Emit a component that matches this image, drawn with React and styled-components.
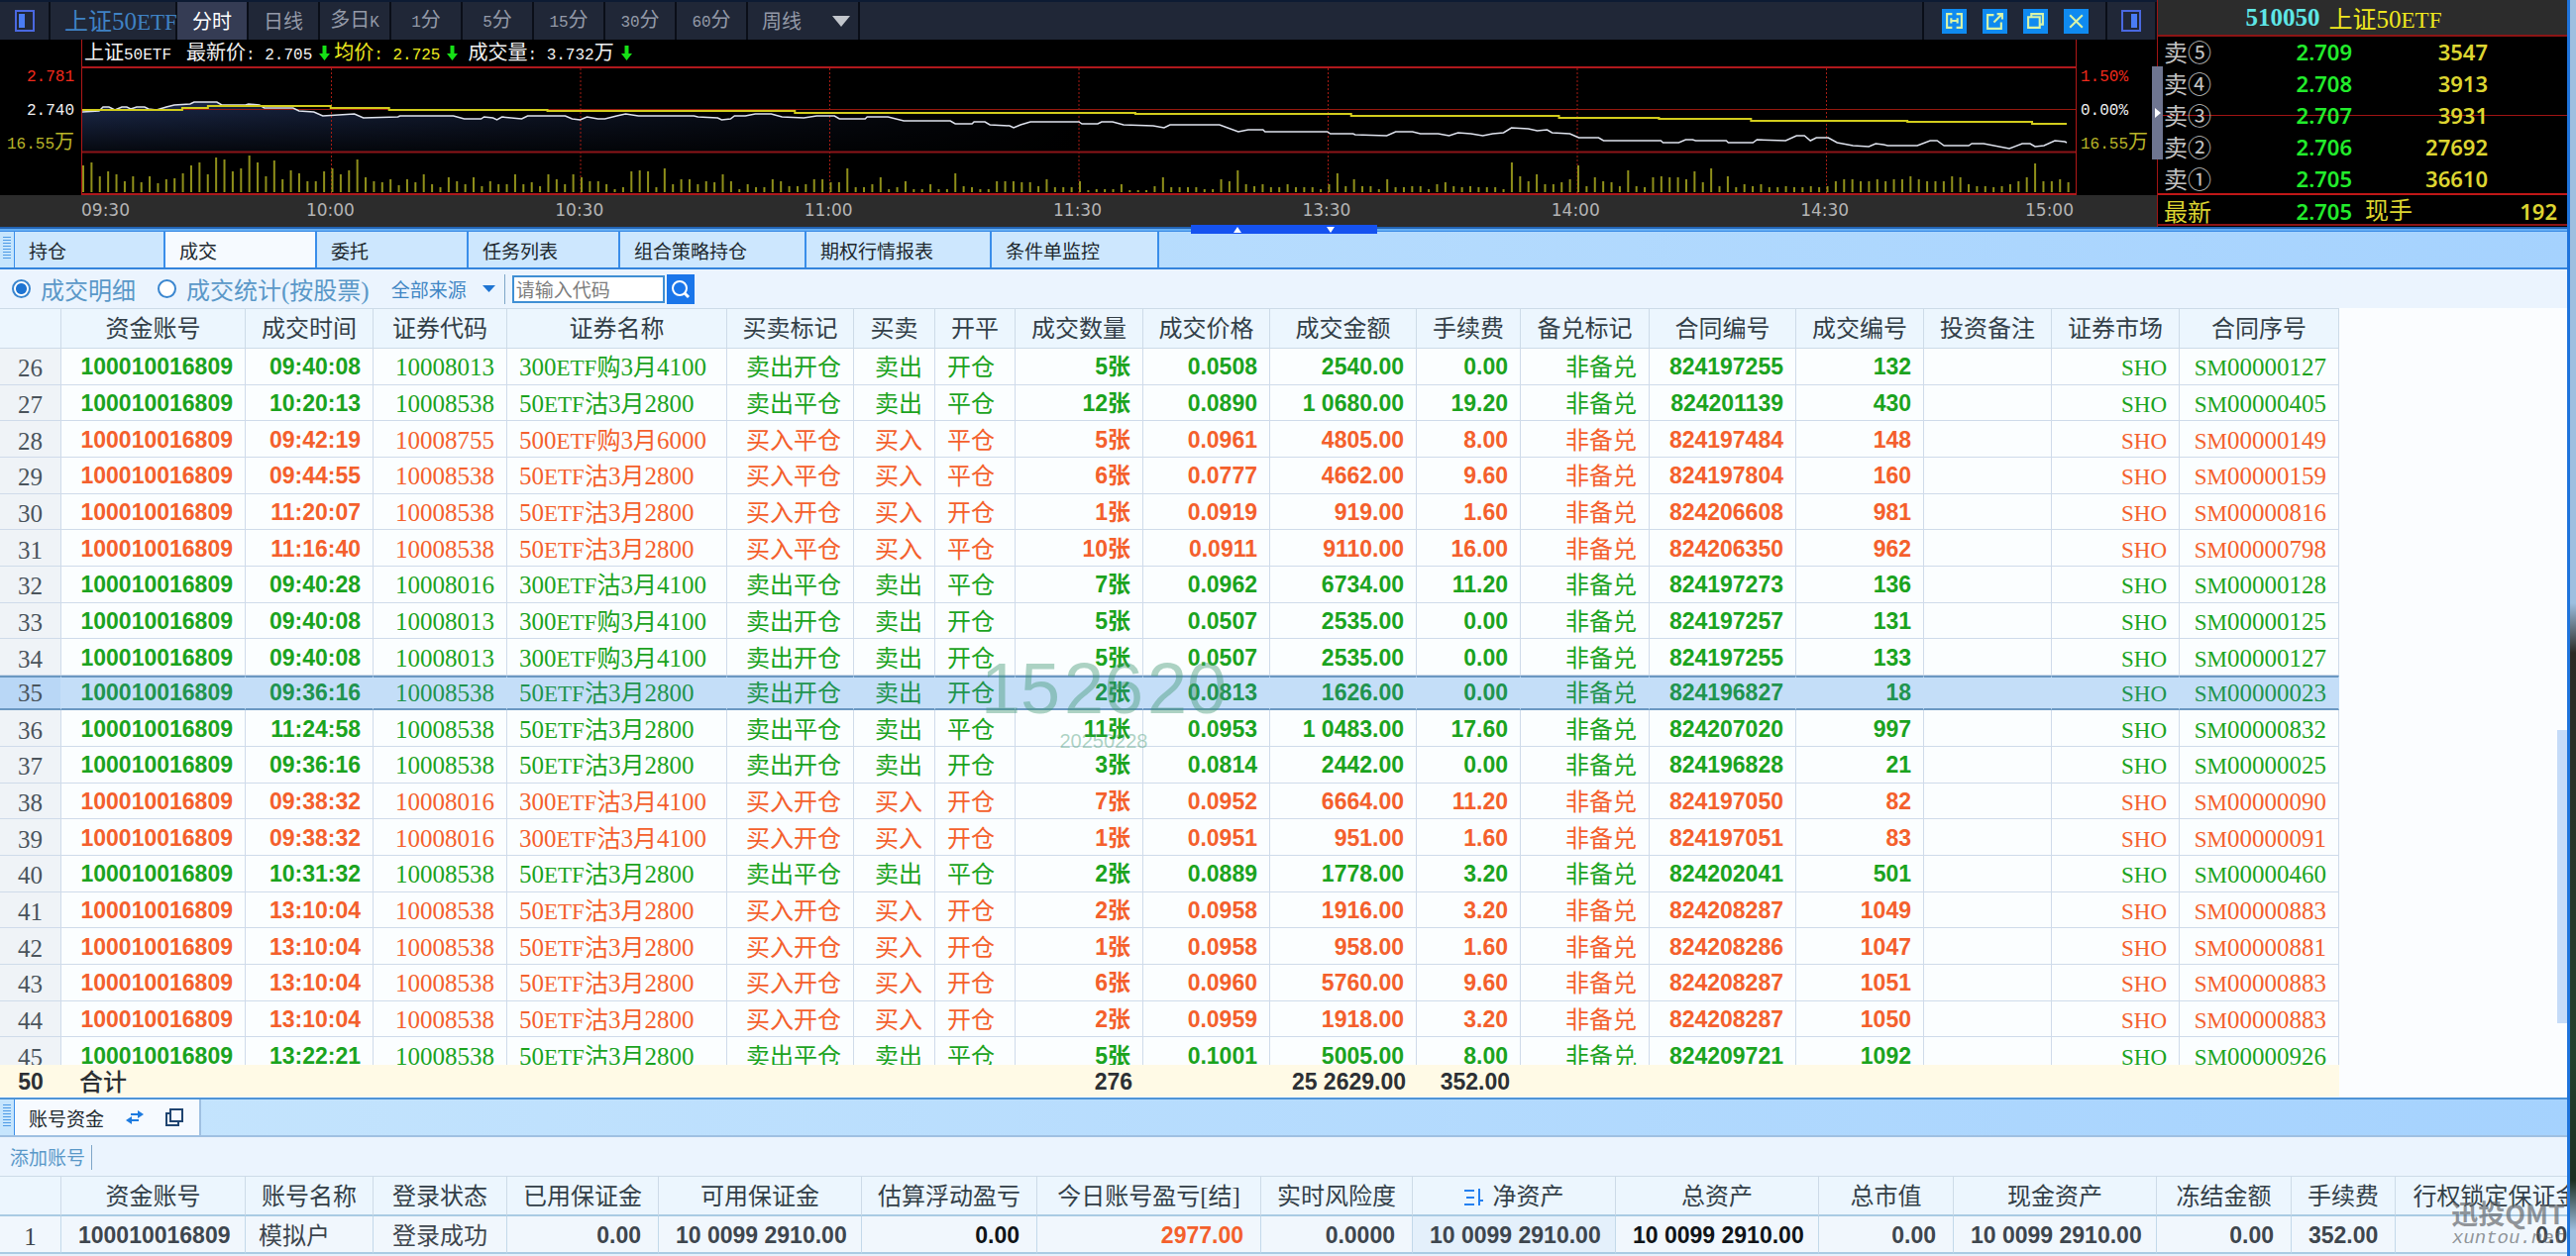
import React from "react";
import styled, { createGlobalStyle, css } from "styled-components";

const CJK = '"Noto Sans CJK SC", sans-serif';
const MONO = '"Liberation Mono", "Noto Sans CJK SC", monospace';
const SERIF = '"Liberation Serif", "Noto Sans CJK SC", serif';
const SANS = '"Liberation Sans", "Noto Sans CJK SC", sans-serif';

const GlobalStyle = createGlobalStyle`
  *, *::before, *::after { box-sizing: border-box; }
  body { margin: 0; font-family: ${CJK}; overflow: hidden; }
  button, input, select { font: inherit; color: inherit; margin: 0; }
`;

/* ---------- text ---------- */

const LETTERS = /[A-Za-z]/;
const TABLE_SIZE = 24;

const TextRun = styled.span`
  font-family: ${CJK};
  font-size: ${(p) => p.$size}px;
  font-weight: ${(p) => (p.$strong ? 500 : 400)};
  white-space: pre;
`;
const MonoRun = styled.span`
  font-family: ${MONO};
  font-size: 16px;
`;
const SerifRun = styled.span`
  font-family: ${SERIF};
  font-size: ${(p) => (p.$letters ? 23 : 25)}px;
  line-height: 20px;
`;

function Text({ children, size = TABLE_SIZE, strong = false }) {
  const table = size === TABLE_SIZE;
  const pattern = table ? /([A-Za-z]+|[0-9()[\]]+)/ : /([\x20-\x7e]+)/;
  const parts = String(children).split(pattern).filter(Boolean);
  return (
    <TextRun $size={size} $strong={strong}>
      {parts.map((part, i) => {
        if (!/^[\x20-\x7e]/.test(part)) return part;
        return table ? (
          <SerifRun key={i} $letters={LETTERS.test(part)}>{part}</SerifRun>
        ) : (
          <MonoRun key={i}>{part}</MonoRun>
        );
      })}
    </TextRun>
  );
}

/* ---------- frame ---------- */

const Desktop = styled.div`
  height: 100vh;
  padding-right: 6px;
  background: linear-gradient(#9dbfe0 0%, #9dbfe0 48%, #2c2a24 52%, #23402c 84%, #1d2f22 94%, #9dbfe0 98%);
`;
const Frame = styled.main`
  position: relative;
  display: flex;
  flex-direction: column;
  height: 100%;
  overflow: hidden;
  border-right: 3px solid #1f74dc;
  background: #fbfdff;
`;

/* ---------- chart area ---------- */

const MarketArea = styled.section`
  display: flex;
  height: 229px;
  background: #000;
`;
const ChartPane = styled.div`
  position: relative;
  flex: 1;
  min-width: 0;
  display: flex;
  flex-direction: column;
`;
const ChartToolbar = styled.div`
  display: flex;
  height: 40px;
  border-top: 2px solid #0d1b33;
  background: #202737;
`;
const ToolCell = styled.div`
  display: flex;
  align-items: center;
  justify-content: center;
  gap: 16px;
  width: ${(p) => p.$width}px;
  border-right: 2px solid #0a0e18;
`;
const PanelToggle = styled.button`
  display: grid;
  place-items: center;
  padding: 0;
  border: 0;
  background: none;
`;
const SymbolTab = styled.button`
  width: 128px;
  padding: 0 0 0 14px;
  border: 0;
  border-right: 2px solid #0a0e18;
  background: none;
  color: #3f82c4;
  line-height: 30px;
`;
const PeriodTab = styled.button`
  width: 72px;
  padding: 0;
  border: 0;
  border-right: 2px solid #0a0e18;
  background: ${(p) => (p.$active ? "#353c54" : "none")};
  color: ${(p) => (p.$active ? "#ffffff" : "#949aa8")};
  line-height: 30px;
`;
const PeriodMenu = styled.button`
  display: flex;
  align-items: center;
  justify-content: space-between;
  width: 113px;
  padding: 0 8px 0 14px;
  border: 0;
  border-right: 2px solid #0a0e18;
  background: none;
  color: #949aa8;
  line-height: 30px;
`;
const Spacer = styled.div`
  flex: 1;
`;
const WindowButton = styled.button`
  display: grid;
  place-items: center;
  width: 25px;
  height: 25px;
  padding: 0;
  border: 0;
  background: #0f8af0;
`;

const ChartBody = styled.div`
  display: grid;
  grid-template-columns: 82px 1fr 81px;
  height: 157px;
`;
const ScaleColumn = styled.div`
  display: flex;
  flex-direction: column;
  align-items: ${(p) => (p.$side === "left" ? "flex-end" : "flex-start")};
  padding: 17px ${(p) => (p.$side === "left" ? 7 : 4)}px 0;
`;
const ScaleLabel = styled.span`
  height: 34px;
  line-height: 34px;
  color: ${(p) => p.$color};
`;
const Plot = styled.div`
  display: flex;
  flex-direction: column;
  border-left: 1px solid #b01818;
  border-right: 1px solid #b01818;
`;
const Legend = styled.div`
  display: flex;
  align-items: center;
  height: 27px;
  padding-left: 2px;
  color: #f2f2f2;
`;
const LegendItem = styled.span`
  display: flex;
  align-items: center;
  gap: 7px;
  margin-right: ${(p) => p.$gap}px;
  color: ${(p) => p.$color || "inherit"};
  line-height: 24px;
`;
const PlotSvg = styled.svg`
  display: block;
  width: 100%;
  height: 130px;
`;
const TimeAxis = styled.div`
  display: grid;
  grid-template-columns: 1fr repeat(7, 2fr) 1fr;
  height: 32px;
  padding: 0 84px 0 82px;
  background: #2c2c2c;
`;
const TimeLabel = styled.span`
  font: 17px/30px "DejaVu Sans", sans-serif;
  color: #b4b4b4;
  text-align: ${(p) => p.$align};
`;
const SideHandle = styled.button`
  position: absolute;
  right: -6px;
  top: 67px;
  display: grid;
  place-items: center;
  width: 11px;
  height: 94px;
  padding: 0;
  border: 0;
  background: #6e7590;
`;

/* ---------- quote panel ---------- */

const QuotePanel = styled.aside`
  display: flex;
  flex-direction: column;
  width: 414px;
  border-left: 1px solid #a01414;
`;
const QuoteTitle = styled.header`
  display: flex;
  align-items: center;
  justify-content: center;
  gap: 9px;
  height: 37px;
  padding-right: 38px;
  border-bottom: 2px solid #8c1515;
  background: #2c2c2c;
  color: #f0e81e;
  line-height: 30px;
`;
const SymbolCode = styled.strong`
  font: bold 25px/30px "Liberation Serif", serif;
  color: #5ee6e6;
`;
const AskList = styled.div`
  height: 160px;
  border-bottom: 2px solid #c01818;
  background: linear-gradient(#a01414, #a01414) 0 79px / 100% 1px no-repeat;
`;
const QuoteRow = styled.div`
  display: grid;
  grid-template-columns: 48px 142px 1fr;
  align-items: center;
  height: ${(p) => (p.$last ? 31 : 32)}px;
  padding: 0 ${(p) => (p.$last ? 10 : 80)}px 2px 6px;
  line-height: 28px;
  color: ${(p) => (p.$last ? "#ddd531" : "#c4c4c4")};
  ${(p) => p.$last && css`
    grid-template-columns: 48px 142px 74px 1fr;
    border-bottom: 2px solid #8c1515;
  `}
`;
const QuoteValue = styled.span`
  font: 600 22px/28px "Noto Sans", sans-serif;
  text-align: right;
  color: ${(p) => p.$color};
`;
const QuoteLabel = styled.span`
  padding-left: 13px;
`;

/* ---------- splitter ---------- */

const Splitter = styled.div`
  position: relative;
  z-index: 1;
  height: 5px;
  border-top: 2px solid #2264b4;
  border-bottom: 1px solid #3c8ce6;
  background: #64aef4;
`;
const SplitHandle = styled.div`
  position: absolute;
  left: 50%;
  top: -4px;
  display: flex;
  align-items: center;
  justify-content: space-around;
  width: 188px;
  height: 9px;
  margin-left: -94px;
  background: #1552f0;
`;

/* ---------- dock tabs ---------- */

const DockBar = styled.nav`
  display: flex;
  flex: none;
  height: 38px;
  border-bottom: 2px solid ${(p) => (p.$soft ? "#9fc0e2" : "#3484dc")};
  background: linear-gradient(90deg, #c6e5fd, #a5d2fe);
`;
const Grip = styled.span`
  width: 8px;
  margin: 5px 3px 9px;
  background: repeating-linear-gradient(#4e9be6 0 1px, transparent 1px 3px);
`;
const DockTab = styled.button`
  display: flex;
  align-items: center;
  gap: 22px;
  width: ${(p) => p.$width}px;
  padding: 0 14px;
  border: 0;
  border-right: 2px solid ${(p) => (p.$soft ? "#9fc0e2" : "#3a8eea")};
  background: ${(p) => (p.$active ? "#f6faff" : "#cde7fe")};
  color: #20282e;
  &:first-of-type { border-left: 1px solid #3a8eea; }
`;

/* ---------- filter bar ---------- */

const FilterBar = styled.form`
  display: flex;
  flex: none;
  align-items: center;
  height: 39px;
  padding: 0 12px;
  background: #ebf4fe;
  color: #5a98c8;
`;
const RadioLabel = styled.label`
  display: flex;
  align-items: center;
  gap: 10px;
  margin-right: ${(p) => p.$gap}px;
  line-height: 30px;
`;
const Radio = styled.input`
  appearance: none;
  width: 19px;
  height: 19px;
  border: 2px solid #3a86cf;
  border-radius: 50%;
  background: #fff;
  &:checked {
    background: radial-gradient(circle, #1e74d2 0 5px, #fff 6px);
  }
`;
const SourceField = styled.label`
  display: flex;
  align-items: center;
  padding-right: 9px;
  border-right: 1px solid #7fa6c8;
`;
const SourceSelect = styled.select`
  appearance: none;
  width: 92px;
  height: 30px;
  padding: 0;
  border: 0;
  background: none;
  font-size: 19px;
  color: #3f86c4;
`;
const CodeInput = styled.input`
  width: 154px;
  height: 28px;
  margin: 0 2px 0 7px;
  padding: 0 2px;
  border: 2px solid #3f8fd4;
  background: #fff;
  font-size: 19px;
  &::placeholder { color: #7c7c7c; opacity: 1; }
`;
const SearchButton = styled.button`
  display: grid;
  place-items: center;
  width: 28px;
  height: 30px;
  padding: 0;
  border: 0;
  background: #1a76ea;
`;

/* ---------- tables ---------- */

const DealArea = styled.section`
  position: relative;
  flex: 1;
  min-height: 0;
  overflow: hidden;
`;
const Grid = styled.table`
  table-layout: fixed;
  width: ${(p) => p.$width}px;
  border-collapse: separate;
  border-spacing: 0;
`;
const DealGrid = styled(Grid)`
  height: 773px;
`;
const Head = styled.th`
  height: 41px;
  padding: 0;
  border-right: 1px solid #cddbe8;
  border-bottom: ${(p) => (p.$fund ? "2px solid #a9cbe3" : "1px solid #cddbe8")};
  border-top: 1px solid #cddbe8;
  background: #ecf6fe;
  color: #333f48;
  line-height: 34px;
  white-space: nowrap;
`;
const Cell = styled.td`
  padding: 2px 12px 0;
  border-right: 1px solid #cfdbea;
  border-bottom: 1px solid #cfdbea;
  line-height: 24px;
  text-align: ${(p) => p.$align || "right"};
  white-space: nowrap;
`;
const IndexCell = styled(Cell)`
  padding: 4px 0 0;
  background: ${(p) => (p.$selected ? "#b9d7f6" : "#eff3f7")};
  color: #4a545c;
  text-align: center;
`;
const DealRow = styled.tr`
  background: ${(p) => (p.$selected ? "#c4def8" : "#fbfeff")};
  color: ${(p) => (p.$buy ? "#f4602c" : "#1ba31e")};
  ${(p) => p.$selected && css`
    color: #21944f;
    ${Cell} {
      padding-top: 0;
      border-top: 2px solid #6b98c2;
      border-bottom: 2px solid #6b98c2;
      border-right-color: #c4def8;
    }
  `}
`;
const Num = styled.b`
  font: bold 23px ${SANS};
  line-height: 24px;
`;
const ScrollThumb = styled.div`
  position: absolute;
  right: 0;
  bottom: 42px;
  width: 10px;
  height: 296px;
  background: #c5dbf8;
`;
const TotalArea = styled.section`
  flex: none;
  height: 35px;
  border-bottom: 2px solid #4f94d6;
`;
const TotalRow = styled.tr`
  background: #fffae6;
  color: #2c3034;
`;
const TotalCell = styled.td`
  height: 32px;
  padding: 2px 11px 0;
  line-height: 24px;
  text-align: ${(p) => p.$align || "right"};
  white-space: nowrap;
`;
const LabelCell = styled(TotalCell)`
  padding: 2px 18px 0;
  text-align: left;
`;

const AccountBar = styled.div`
  display: flex;
  flex: none;
  align-items: center;
  height: 39px;
  padding: 2px 0 0 10px;
  background: #ebf4fe;
`;
const AddAccount = styled.button`
  padding: 0 6px 0 0;
  border: 0;
  border-right: 1px solid #7fa6c8;
  background: none;
  color: #5a98c8;
  line-height: 24px;
`;
const FundArea = styled.section`
  flex: none;
  height: 81px;
  overflow: hidden;
  background: #e6f1fc;
`;
const FundCell = styled.td`
  height: 38px;
  padding: 2px ${(p) => (p.$align === "left" ? 13 : 17)}px 0;
  border-right: 1px solid #c3d9ea;
  border-bottom: 2px solid #a9cbe3;
  background: ${(p) => (p.$tint ? "#e4f0fb" : "#f1f7fd")};
  color: ${(p) => p.$color || "#3e464e"};
  line-height: 24px;
  text-align: ${(p) => p.$align || "right"};
  white-space: nowrap;
`;
const FundIndex = styled(FundCell)`
  padding: 4px 0 0;
  text-align: center;
`;
const SortIcon = styled.svg`
  margin-right: 9px;
  vertical-align: -2px;
`;

/* ---------- overlays ---------- */

const Clock = styled.div`
  position: absolute;
  left: 988px;
  top: 652px;
  display: flex;
  flex-wrap: wrap;
  justify-content: center;
  width: 252px;
  font-family: "Liberation Sans", sans-serif;
  color: rgba(62, 150, 112, 0.42);
  pointer-events: none;
`;
const ClockPair = styled.span`
  width: 84px;
  font-size: 72px;
  line-height: 86px;
  text-align: center;
`;
const ClockDate = styled.span`
  font-size: 20px;
  line-height: 20px;
`;
const Brand = styled.div`
  position: absolute;
  right: 2px;
  bottom: 8px;
  text-align: right;
  color: rgba(100, 104, 108, 0.7);
  pointer-events: none;
`;
const BrandName = styled.div`
  font: bold 27px/30px ${CJK};
`;
const BrandSite = styled.div`
  font: italic 19px/20px ${MONO};
`;

/* ---------- data ---------- */

const PERIODS = ["分时", "日线", "多日K", "1分", "5分", "15分", "30分", "60分"];
const TIMES = ["09:30", "10:00", "10:30", "11:00", "11:30", "13:30", "14:00", "14:30", "15:00"];
const ASKS = [
  ["卖⑤", "2.709", "3547"],
  ["卖④", "2.708", "3913"],
  ["卖③", "2.707", "3931"],
  ["卖②", "2.706", "27692"],
  ["卖①", "2.705", "36610"],
];
const DOCK_TABS = [
  ["持仓", 153], ["成交", 153], ["委托", 153], ["任务列表", 153],
  ["组合策略持仓", 188], ["期权行情报表", 187], ["条件单监控", 169],
];

const VOLUMES = [
  27,30,16,21,18,11,16,10,16,9,13,14,19,27,30,18,35,33,21,24,37,30,16,32,13,22,19,11,11,21,
  24,18,22,33,15,11,10,13,7,13,10,18,8,5,15,11,8,15,6,11,8,8,18,8,10,6,18,13,8,18,
  15,11,11,8,3,5,21,22,21,5,24,8,13,13,8,11,10,18,11,3,8,5,5,13,11,6,6,8,13,13,
  10,10,24,5,5,8,15,3,5,11,3,3,8,3,3,19,6,5,3,3,11,11,11,10,10,6,13,5,5,5,
  11,2,3,3,3,8,2,2,2,6,15,5,5,5,5,3,3,13,11,22,8,6,8,5,5,8,5,5,5,3,
  8,19,6,13,6,6,3,13,5,5,6,6,3,8,10,6,5,6,5,5,5,3,30,16,11,18,8,8,10,13,
  27,6,15,11,10,6,22,6,5,15,16,15,15,13,21,10,24,6,16,5,8,6,8,5,5,6,5,5,6,5,
  6,11,13,13,11,11,13,11,13,13,16,13,11,11,11,16,15,8,6,6,5,6,8,11,15,29,11,11,13,10,
];
const PRICE =
  "0,46 17,45 21,41 27,41 33,44 40,41 45,41 49,43 55,41 63,41 67,43 75,44 85,41 93,39 109,38 113,36 136,36 141,39 165,39 168,38 179,39 184,42 213,42 219,45 234,46 243,50 275,48 284,52 319,51 321,50 375,50 386,53 403,53 406,51 415,52 419,54 424,51 444,53 450,50 488,50 495,53 503,54 510,51 521,53 528,53 540,50 549,48 562,50 618,50 622,51 642,52 646,54 655,53 659,50 670,50 680,48 696,48 707,51 729,52 742,50 760,50 765,53 791,53 793,51 814,51 830,55 877,55 882,58 899,58 901,56 912,56 917,59 937,60 941,62 948,59 958,56 1007,56 1010,58 1026,58 1030,56 1041,56 1052,59 1082,60 1093,62 1099,59 1149,59 1168,66 1178,64 1193,64 1195,66 1258,66 1261,68 1284,68 1286,69 1318,70 1327,66 1344,66 1352,68 1370,68 1381,70 1390,67 1403,68 1415,70 1425,68 1436,67 1444,62 1461,63 1470,65 1480,64 1485,67 1503,68 1512,72 1532,72 1537,75 1595,75 1597,77 1613,77 1620,74 1627,74 1630,75 1661,75 1663,77 1688,77 1692,74 1721,75 1732,70 1740,70 1746,75 1752,72 1764,72 1773,77 1789,80 1805,81 1812,78 1820,79 1824,80 1854,80 1867,75 1874,75 1881,80 1906,80 1909,78 1921,78 1947,83 1960,78 1968,78 1973,81 1982,80 1993,75 2003,76 2005,77";
const AVERAGE =
  "0,44 101,44 101,42 127,42 127,40 251,40 251,42 310,42 310,44 470,44 470,45 720,45 720,47 1064,47 1064,48 1282,48 1282,50 1492,50 1492,52 1593,52 1593,53 1686,53 1686,55 1844,55 1844,56 1970,56 1970,58 2005,58";

const DEAL_COLUMNS = [
  ["", 62], ["资金账号", 186], ["成交时间", 129], ["证券代码", 135], ["证券名称", 222],
  ["买卖标记", 128], ["买卖", 82], ["开平", 81], ["成交数量", 129], ["成交价格", 128],
  ["成交金额", 148], ["手续费", 105], ["备兑标记", 130], ["合同编号", 148], ["成交编号", 129],
  ["投资备注", 129], ["证券市场", 129], ["合同序号", 161],
];
const CODES = {
  A: ["10008013", "300ETF购3月4100"],
  B: ["10008538", "50ETF沽3月2800"],
  C: ["10008755", "500ETF购3月6000"],
  D: ["10008016", "300ETF沽3月4100"],
};
const DEALS = [
  [26, "09:40:08", "A", "卖出", "开仓", 5, "0.0508", "2540.00", "0.00", "824197255", 132, "127"],
  [27, "10:20:13", "B", "卖出", "平仓", 12, "0.0890", "1 0680.00", "19.20", "824201139", 430, "405"],
  [28, "09:42:19", "C", "买入", "平仓", 5, "0.0961", "4805.00", "8.00", "824197484", 148, "149"],
  [29, "09:44:55", "B", "买入", "平仓", 6, "0.0777", "4662.00", "9.60", "824197804", 160, "159"],
  [30, "11:20:07", "B", "买入", "开仓", 1, "0.0919", "919.00", "1.60", "824206608", 981, "816"],
  [31, "11:16:40", "B", "买入", "平仓", 10, "0.0911", "9110.00", "16.00", "824206350", 962, "798"],
  [32, "09:40:28", "D", "卖出", "平仓", 7, "0.0962", "6734.00", "11.20", "824197273", 136, "128"],
  [33, "09:40:08", "A", "卖出", "开仓", 5, "0.0507", "2535.00", "0.00", "824197257", 131, "125"],
  [34, "09:40:08", "A", "卖出", "开仓", 5, "0.0507", "2535.00", "0.00", "824197255", 133, "127"],
  [35, "09:36:16", "B", "卖出", "开仓", 2, "0.0813", "1626.00", "0.00", "824196827", 18, "023"],
  [36, "11:24:58", "B", "卖出", "平仓", 11, "0.0953", "1 0483.00", "17.60", "824207020", 997, "832"],
  [37, "09:36:16", "B", "卖出", "开仓", 3, "0.0814", "2442.00", "0.00", "824196828", 21, "025"],
  [38, "09:38:32", "D", "买入", "开仓", 7, "0.0952", "6664.00", "11.20", "824197050", 82, "090"],
  [39, "09:38:32", "D", "买入", "开仓", 1, "0.0951", "951.00", "1.60", "824197051", 83, "091"],
  [40, "10:31:32", "B", "卖出", "平仓", 2, "0.0889", "1778.00", "3.20", "824202041", 501, "460"],
  [41, "13:10:04", "B", "买入", "开仓", 2, "0.0958", "1916.00", "3.20", "824208287", 1049, "883"],
  [42, "13:10:04", "B", "买入", "开仓", 1, "0.0958", "958.00", "1.60", "824208286", 1047, "881"],
  [43, "13:10:04", "B", "买入", "开仓", 6, "0.0960", "5760.00", "9.60", "824208287", 1051, "883"],
  [44, "13:10:04", "B", "买入", "开仓", 2, "0.0959", "1918.00", "3.20", "824208287", 1050, "883"],
  [45, "13:22:21", "B", "卖出", "平仓", 5, "0.1001", "5005.00", "8.00", "824209721", 1092, "926"],
];
const FUND_COLUMNS = [
  { w: 62 },
  { title: "资金账号", w: 186, value: "100010016809" },
  { title: "账号名称", w: 129, value: "模拟户", align: "left" },
  { title: "登录状态", w: 135, value: "登录成功", align: "center" },
  { title: "已用保证金", w: 153, value: "0.00" },
  { title: "可用保证金", w: 205, value: "10 0099 2910.00" },
  { title: "估算浮动盈亏", w: 177, value: "0.00", color: "#101418" },
  { title: "今日账号盈亏[结]", w: 226, value: "2977.00", color: "#f4602c" },
  { title: "实时风险度", w: 153, value: "0.0000" },
  { title: "净资产", w: 205, value: "10 0099 2910.00", sorted: true },
  { title: "总资产", w: 205, value: "10 0099 2910.00", color: "#101418" },
  { title: "总市值", w: 136, value: "0.00" },
  { title: "现金资产", w: 205, value: "10 0099 2910.00" },
  { title: "冻结金额", w: 136, value: "0.00" },
  { title: "手续费", w: 105, value: "352.00" },
  { title: "行权锁定保证金", w: 204, value: "0.00" },
];

/* ---------- icons ---------- */

const PanelIcon = ({ flip }) => (
  <svg width="20" height="22" viewBox="0 0 20 22" aria-hidden="true">
    <rect x="1" y="1" width="18" height="20" fill="none" stroke="#4a68e0" strokeWidth="2" />
    <rect x={flip ? 10 : 4} y="4" width="6" height="14" fill="#4a7cf4" />
  </svg>
);
const Triangle = ({ w = 12, h = 7, up, color }) => (
  <svg width={w} height={h} viewBox="0 0 12 8" preserveAspectRatio="none" aria-hidden="true">
    <path d={up ? "M0 8H12L6 0Z" : "M0 0H12L6 8Z"} fill={color} />
  </svg>
);
const DownArrow = () => (
  <svg width="11" height="15" viewBox="0 0 11 15" aria-hidden="true">
    <path d="M3.500 0H7.500V8H11L5.500 15L0 8H3.500Z" fill="#16e016" />
  </svg>
);
const WINDOW_ICONS = {
  并排: "M7 2H2V15H7M11 2H16V15H11M6 8.500H12M6 6V11M12 6V11",
  弹出: "M8 3H2V16H15V10M11 2H16V7M16 2L8 10",
  还原: "M5 5V2H16V12H13M2 5H13V15H2Z",
  关闭: "M3 3L15 15M15 3L3 15",
};
const LineIcon = ({ d }) => (
  <svg width="19" height="19" viewBox="0 0 18 18" fill="none" stroke="#d8f3a8" strokeWidth="2" aria-hidden="true">
    <path d={d} />
  </svg>
);

/* ---------- sections ---------- */

function PriceChart() {
  const step = 2014 / 240;
  return (
    <PlotSvg viewBox="0 0 2014 130" preserveAspectRatio="none" role="img" aria-label="分时走势">
      <defs>
        <linearGradient id="fade" x1="0" y1="0" x2="0" y2="1">
          <stop offset="0" stopColor="#1c2a4c" />
          <stop offset="1" stopColor="#060910" />
        </linearGradient>
        <linearGradient id="veil" x1="0" y1="0" x2="1" y2="0">
          <stop offset="0" stopColor="#000" stopOpacity="0" />
          <stop offset="0.500" stopColor="#000" stopOpacity="1" />
        </linearGradient>
      </defs>
      <polygon points={`0,86 ${PRICE} 2005,86`} fill="url(#fade)" />
      <rect x="0" y="30" width="2014" height="57" fill="url(#veil)" />
      {[1, 2, 3, 4, 5, 6, 7].map((i) => (
        <line key={i} x1={i * 251.75} x2={i * 251.75} y1="2" y2="130" stroke="#a81c14" strokeWidth="1" strokeDasharray="2 2" />
      ))}
      <line x1="0" x2="2014" y1="1" y2="1" stroke="#b0181c" strokeWidth="2" />
      <line x1="0" x2="2014" y1="43.500" y2="43.500" stroke="#96180e" strokeWidth="1" />
      <line x1="0" x2="2014" y1="86.500" y2="86.500" stroke="#8c1418" strokeWidth="2" />
      {VOLUMES.map((v, i) => (
        <rect key={i} x={i * step} y={127 - v} width="2" height={v} fill="#8f8f1a" />
      ))}
      <line x1="0" x2="2014" y1="129" y2="129" stroke="#b0181c" strokeWidth="2" />
      <polyline points={PRICE} fill="none" stroke="#dfe3ee" strokeWidth="1.500" />
      <polyline points={AVERAGE} fill="none" stroke="#d2cc1c" strokeWidth="2" />
    </PlotSvg>
  );
}

function ColumnWidths({ widths }) {
  return (
    <colgroup>
      {widths.map((w, i) => <col key={i} width={w} />)}
    </colgroup>
  );
}

const DEAL_WIDTHS = DEAL_COLUMNS.map((c) => c[1]);
const DEAL_TOTAL = DEAL_WIDTHS.reduce((a, b) => a + b, 0);
const FUND_WIDTHS = FUND_COLUMNS.map((c) => c.w);
const FUND_TOTAL = FUND_WIDTHS.reduce((a, b) => a + b, 0);

function Deal({ row }) {
  const [no, time, code, side, pos, qty, price, amount, fee, contract, deal, serial] = row;
  const selected = no === 35;
  return (
    <DealRow $buy={side === "买入"} $selected={selected}>
      <IndexCell $selected={selected}><Text>{no}</Text></IndexCell>
      <Cell><Num>100010016809</Num></Cell>
      <Cell><Num>{time}</Num></Cell>
      <Cell><Text>{CODES[code][0]}</Text></Cell>
      <Cell $align="left"><Text>{CODES[code][1]}</Text></Cell>
      <Cell><Text>{side + pos}</Text></Cell>
      <Cell><Text>{side}</Text></Cell>
      <Cell $align="left"><Text>{pos}</Text></Cell>
      <Cell><Num>{qty}张</Num></Cell>
      <Cell><Num>{price}</Num></Cell>
      <Cell><Num>{amount}</Num></Cell>
      <Cell><Num>{fee}</Num></Cell>
      <Cell><Text>非备兑</Text></Cell>
      <Cell><Num>{contract}</Num></Cell>
      <Cell><Num>{deal}</Num></Cell>
      <Cell />
      <Cell><Text>SHO</Text></Cell>
      <Cell><Text>{"SM00000" + serial}</Text></Cell>
    </DealRow>
  );
}

export default function App() {
  return (
    <Desktop>
      <GlobalStyle />
      <Frame>
        <MarketArea>
          <ChartPane>
            <ChartToolbar>
              <ToolCell $width={51}>
                <PanelToggle type="button" aria-label="左侧面板"><PanelIcon /></PanelToggle>
              </ToolCell>
              <SymbolTab type="button"><Text>上证50ETF</Text></SymbolTab>
              {PERIODS.map((p, i) => (
                <PeriodTab key={p} type="button" $active={i === 0}><Text size={20}>{p}</Text></PeriodTab>
              ))}
              <PeriodMenu type="button">
                <Text size={20}>周线</Text>
                <Triangle w={18} h={11} color="#c2c6cc" />
              </PeriodMenu>
              <Spacer />
              <ToolCell $width={2} />
              <ToolCell $width={185}>
                {Object.entries(WINDOW_ICONS).map(([name, d]) => (
                  <WindowButton key={name} type="button" aria-label={name}><LineIcon d={d} /></WindowButton>
                ))}
              </ToolCell>
              <ToolCell $width={50}>
                <PanelToggle type="button" aria-label="右侧面板"><PanelIcon flip /></PanelToggle>
              </ToolCell>
            </ChartToolbar>
            <ChartBody>
              <ScaleColumn $side="left">
                <ScaleLabel $color="#f02a1c"><Text size={20}>2.781</Text></ScaleLabel>
                <ScaleLabel $color="#f0f0f0"><Text size={20}>2.740</Text></ScaleLabel>
                <ScaleLabel $color="#b8b428"><Text size={20}>16.55万</Text></ScaleLabel>
              </ScaleColumn>
              <Plot>
                <Legend>
                  <LegendItem $gap={15}><Text size={20}>上证50ETF</Text></LegendItem>
                  <LegendItem $gap={4}><Text size={20}>最新价: 2.705</Text><DownArrow /></LegendItem>
                  <LegendItem $gap={10} $color="#ece81e"><Text size={20}>均价: 2.725</Text><DownArrow /></LegendItem>
                  <LegendItem $gap={0}><Text size={20}>成交量: 3.732万</Text><DownArrow /></LegendItem>
                </Legend>
                <PriceChart />
              </Plot>
              <ScaleColumn $side="right">
                <ScaleLabel $color="#f02a1c"><Text size={20}>1.50%</Text></ScaleLabel>
                <ScaleLabel $color="#f0f0f0"><Text size={20}>0.00%</Text></ScaleLabel>
                <ScaleLabel $color="#b8b428"><Text size={20}>16.55万</Text></ScaleLabel>
              </ScaleColumn>
            </ChartBody>
            <TimeAxis>
              {TIMES.map((t, i) => (
                <TimeLabel key={t} $align={i === 0 ? "left" : i === 8 ? "right" : "center"}>{t}</TimeLabel>
              ))}
            </TimeAxis>
            <SideHandle type="button" aria-label="收起报价">
              <svg width="6" height="10" viewBox="0 0 6 10" aria-hidden="true"><path d="M0 0V10L6 5Z" fill="#fff" /></svg>
            </SideHandle>
          </ChartPane>
          <QuotePanel>
            <QuoteTitle>
              <SymbolCode>510050</SymbolCode>
              <Text>上证50ETF</Text>
            </QuoteTitle>
            <AskList>
              {ASKS.map(([label, price, qty]) => (
                <QuoteRow key={label}>
                  <Text>{label}</Text>
                  <QuoteValue $color="#22ec2c">{price}</QuoteValue>
                  <QuoteValue $color="#ddd531">{qty}</QuoteValue>
                </QuoteRow>
              ))}
            </AskList>
            <QuoteRow $last>
              <Text>最新</Text>
              <QuoteValue $color="#22ec2c">2.705</QuoteValue>
              <QuoteLabel><Text>现手</Text></QuoteLabel>
              <QuoteValue $color="#ddd531">192</QuoteValue>
            </QuoteRow>
          </QuotePanel>
        </MarketArea>

        <Splitter>
          <SplitHandle>
            <Triangle w={8} h={6} up color="#fff" />
            <Triangle w={8} h={6} color="#fff" />
          </SplitHandle>
        </Splitter>

        <DockBar>
          <Grip />
          {DOCK_TABS.map(([name, w], i) => (
            <DockTab key={name} type="button" $width={w} $active={i === 1}><Text size={19}>{name}</Text></DockTab>
          ))}
        </DockBar>

        <FilterBar onSubmit={(e) => e.preventDefault()}>
          <RadioLabel $gap={22}>
            <Radio type="radio" name="view" value="detail" defaultChecked />
            <Text>成交明细</Text>
          </RadioLabel>
          <RadioLabel $gap={22}>
            <Radio type="radio" name="view" value="summary" />
            <Text>成交统计(按股票)</Text>
          </RadioLabel>
          <SourceField>
            <SourceSelect aria-label="来源"><option>全部来源</option></SourceSelect>
            <Triangle w={13} h={7} color="#1e74d2" />
          </SourceField>
          <CodeInput type="text" aria-label="代码" placeholder="请输入代码" />
          <SearchButton type="submit" aria-label="搜索">
            <svg width="20" height="20" viewBox="0 0 20 20" fill="none" stroke="#fff" strokeWidth="2" aria-hidden="true">
              <circle cx="9" cy="9" r="7" /><path d="M14 14L18 18" strokeWidth="3" />
            </svg>
          </SearchButton>
        </FilterBar>

        <DealArea>
          <DealGrid $width={DEAL_TOTAL}>
            <ColumnWidths widths={DEAL_WIDTHS} />
            <thead>
              <tr>{DEAL_COLUMNS.map(([title], i) => <Head key={i} scope="col"><Text>{title}</Text></Head>)}</tr>
            </thead>
            <tbody>{DEALS.map((row) => <Deal key={row[0]} row={row} />)}</tbody>
          </DealGrid>
          <ScrollThumb />
        </DealArea>

        <TotalArea>
          <Grid $width={DEAL_TOTAL}>
            <ColumnWidths widths={DEAL_WIDTHS} />
            <tbody>
              <TotalRow>
                <TotalCell $align="center"><Num>50</Num></TotalCell>
                <LabelCell colSpan={7}><Text strong>合计</Text></LabelCell>
                <TotalCell><Num>276</Num></TotalCell>
                <TotalCell />
                <TotalCell><Num>25 2629.00</Num></TotalCell>
                <TotalCell><Num>352.00</Num></TotalCell>
                <TotalCell colSpan={6} />
              </TotalRow>
            </tbody>
          </Grid>
        </TotalArea>

        <DockBar $soft>
          <Grip />
          <DockTab type="button" $width={189} $active $soft>
            <Text size={19}>账号资金</Text>
            <svg width="18" height="14" viewBox="0 0 18 14" fill="none" stroke="#1e7be0" strokeWidth="2" aria-hidden="true">
              <path d="M5 4H15M3 10H13" /><path d="M12 0L18 4L12 8ZM6 6L0 10L6 14Z" fill="#1e7be0" stroke="none" />
            </svg>
            <svg width="18" height="18" viewBox="0 0 18 18" fill="none" stroke="#1f4470" strokeWidth="2" aria-hidden="true">
              <path d="M5 1H17V13H5ZM5 5H1V17H13V13" />
            </svg>
          </DockTab>
        </DockBar>

        <AccountBar>
          <AddAccount type="button"><Text size={19}>添加账号</Text></AddAccount>
        </AccountBar>

        <FundArea>
          <Grid $width={FUND_TOTAL}>
            <ColumnWidths widths={FUND_WIDTHS} />
            <thead>
              <tr>
                {FUND_COLUMNS.map((c, i) => (
                  <Head key={i} scope="col" $fund>
                    {c.sorted && (
                      <SortIcon width="20" height="18" viewBox="0 0 20 18" fill="none" stroke="#2480f0" strokeWidth="2" aria-hidden="true">
                        <path d="M0 2H10M2 9H10M0 16H10M15 0V17M15 12H19" />
                      </SortIcon>
                    )}
                    <Text>{c.title || ""}</Text>
                  </Head>
                ))}
              </tr>
            </thead>
            <tbody>
              <tr>
                <FundIndex><Text>1</Text></FundIndex>
                {FUND_COLUMNS.slice(1).map((c) => (
                  <FundCell key={c.title} $align={c.align} $color={c.color} $tint={c.sorted}>
                    {c.align ? <Text>{c.value}</Text> : <Num>{c.value}</Num>}
                  </FundCell>
                ))}
              </tr>
            </tbody>
          </Grid>
        </FundArea>

        <Clock aria-hidden="true">
          <ClockPair>15</ClockPair>
          <ClockPair>26</ClockPair>
          <ClockPair>20</ClockPair>
          <ClockDate>20250228</ClockDate>
        </Clock>
        <Brand>
          <BrandName>迅投QMT</BrandName>
          <BrandSite>xuntou.net</BrandSite>
        </Brand>
      </Frame>
    </Desktop>
  );
}
